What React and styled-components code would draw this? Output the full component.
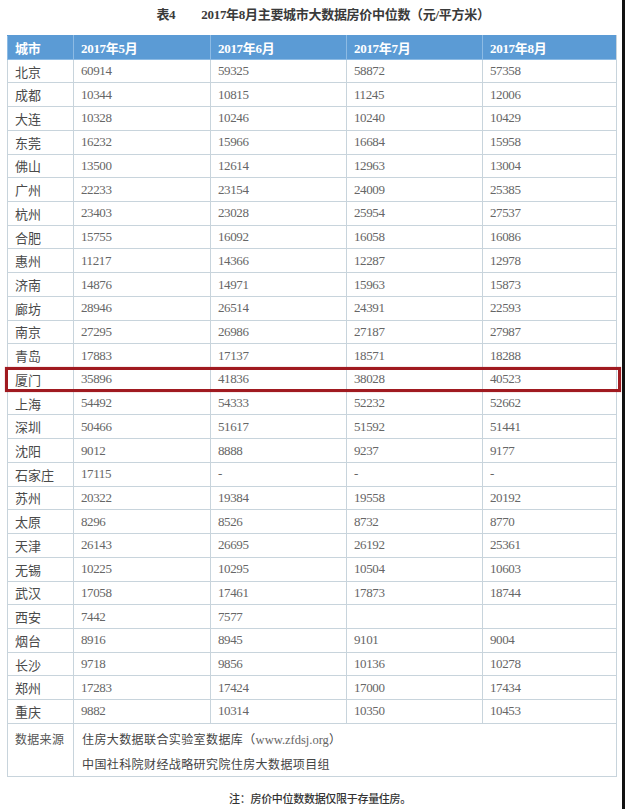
import styled, { createGlobalStyle } from "styled-components";

const GlobalStyle = createGlobalStyle`
  html, body {
    margin: 0;
    padding: 0;
    background: #fff;
  }
  body {
    font-family: "Liberation Serif", "Noto Sans CJK SC", serif;
  }
`;

const Page = styled.div`
  width: 625px;
  height: 809px;
  box-sizing: border-box;
  border-right: 3px solid #111;
  overflow: hidden;
`;

const Title = styled.div`
  height: 35px;
  box-sizing: border-box;
  padding: 7px 0 0 24px;
  display: flex;
  justify-content: center;
  gap: 26px;
  font-family: "Liberation Serif", "Noto Sans CJK SC", serif;
  font-size: 13px;
  font-weight: 700;
  line-height: 16px;
  color: #3a3a3a;
  letter-spacing: -0.3px;
`;

const Table = styled.table`
  margin-left: 7px;
  width: 609px;
  border-collapse: collapse;
  table-layout: fixed;
  border: 1px solid #c8d4dc;

  col:nth-child(1) { width: 66px; }
  col:nth-child(2) { width: 137px; }
  col:nth-child(3) { width: 136px; }
  col:nth-child(4) { width: 136px; }
  col:nth-child(5) { width: 134px; }
`;

const HeadCell = styled.th`
  height: 23.7px;
  padding: 0 0 0 7px;
  box-sizing: border-box;
  background: #5b9bd5;
  border: 1px solid #8dbbe4;
  border-top-color: #5b9bd5;
  color: #fff;
  text-align: left;
  font-family: "Liberation Serif", "Noto Sans CJK SC", serif;
  font-size: 13px;
  font-weight: 700;
  letter-spacing: -0.3px;
`;

const Row = styled.tr`
  height: 23.72px;
  position: relative;

  &::after {
    content: ${(p) => (p.$marked ? '""' : "none")};
    position: absolute;
    top: -1px;
    bottom: -1px;
    left: -3px;
    right: -4px;
    border: 3px solid #a01a20;
    box-shadow: 0 0 1px rgba(160, 26, 32, 0.5);
    pointer-events: none;
  }
`;

const City = styled.td`
  padding: 0 0 0 7px;
  border: 1px solid #c8d4dc;
  font-family: "Noto Sans CJK SC", sans-serif;
  font-size: 13px;
  color: #4a4a4a;
  white-space: nowrap;
`;

const Num = styled.td`
  padding: 0 0 0 7px;
  border: 1px solid #c8d4dc;
  font-family: "Liberation Serif", serif;
  font-size: 13px;
  letter-spacing: -0.4px;
  color: #666;
`;

const SourceLabel = styled.td`
  vertical-align: top;
  padding: 3px 0 0 7px;
  height: 48px;
  box-sizing: border-box;
  border: 1px solid #c8d4dc;
  font-family: "Noto Sans CJK SC", sans-serif;
  font-size: 12px;
  line-height: 24px;
  letter-spacing: 0.3px;
  color: #555;
`;

const SourceText = styled.td`
  vertical-align: top;
  padding: 3px 0 0 8px;
  border: 1px solid #c8d4dc;
  font-family: "Noto Sans CJK SC", sans-serif;
  font-size: 12px;
  letter-spacing: 0.4px;
  line-height: 24px;
  color: #444;

  span {
    font-family: "Liberation Serif", serif;
    font-size: 12.5px;
    color: #666;
    letter-spacing: 0;
  }
`;

const Note = styled.div`
  padding: 13px 0 0 18px;
  text-align: center;
  font-family: "Noto Sans CJK SC", sans-serif;
  font-size: 11px;
  font-weight: 500;
  letter-spacing: -0.3px;
  color: #333;
`;

const months = ["2017年5月", "2017年6月", "2017年7月", "2017年8月"];

const rows = [
  ["北京", "60914", "59325", "58872", "57358"],
  ["成都", "10344", "10815", "11245", "12006"],
  ["大连", "10328", "10246", "10240", "10429"],
  ["东莞", "16232", "15966", "16684", "15958"],
  ["佛山", "13500", "12614", "12963", "13004"],
  ["广州", "22233", "23154", "24009", "25385"],
  ["杭州", "23403", "23028", "25954", "27537"],
  ["合肥", "15755", "16092", "16058", "16086"],
  ["惠州", "11217", "14366", "12287", "12978"],
  ["济南", "14876", "14971", "15963", "15873"],
  ["廊坊", "28946", "26514", "24391", "22593"],
  ["南京", "27295", "26986", "27187", "27987"],
  ["青岛", "17883", "17137", "18571", "18288"],
  ["厦门", "35896", "41836", "38028", "40523"],
  ["上海", "54492", "54333", "52232", "52662"],
  ["深圳", "50466", "51617", "51592", "51441"],
  ["沈阳", "9012", "8888", "9237", "9177"],
  ["石家庄", "17115", "-", "-", "-"],
  ["苏州", "20322", "19384", "19558", "20192"],
  ["太原", "8296", "8526", "8732", "8770"],
  ["天津", "26143", "26695", "26192", "25361"],
  ["无锡", "10225", "10295", "10504", "10603"],
  ["武汉", "17058", "17461", "17873", "18744"],
  ["西安", "7442", "7577", "", ""],
  ["烟台", "8916", "8945", "9101", "9004"],
  ["长沙", "9718", "9856", "10136", "10278"],
  ["郑州", "17283", "17424", "17000", "17434"],
  ["重庆", "9882", "10314", "10350", "10453"],
];

export default function App() {
  return (
    <Page>
      <GlobalStyle />
      <Title>
        <span>表4</span>
        <span>2017年8月主要城市大数据房价中位数（元/平方米）</span>
      </Title>
      <Table>
        <colgroup>
          <col />
          <col />
          <col />
          <col />
          <col />
        </colgroup>
        <thead>
          <tr>
            <HeadCell>城市</HeadCell>
            {months.map((m) => (
              <HeadCell key={m}>{m}</HeadCell>
            ))}
          </tr>
        </thead>
        <tbody>
          {rows.map(([city, ...vals]) => (
            <Row key={city} $marked={city === "厦门"}>
              <City>{city}</City>
              {vals.map((v, i) => (
                <Num key={i}>{v}</Num>
              ))}
            </Row>
          ))}
          <tr>
            <SourceLabel>数据来源</SourceLabel>
            <SourceText colSpan={4}>
              住房大数据联合实验室数据库（<span>www.zfdsj.org</span>）
              <br />
              中国社科院财经战略研究院住房大数据项目组
            </SourceText>
          </tr>
        </tbody>
      </Table>
      <Note>注：房价中位数数据仅限于存量住房。</Note>
    </Page>
  );
}
